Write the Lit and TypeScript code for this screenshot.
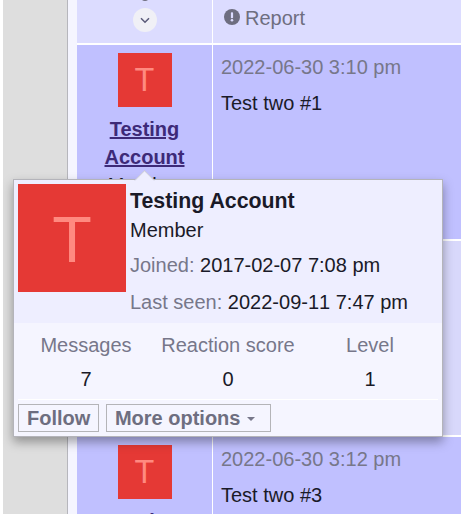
import { LitElement, html, css } from "lit";
import { customElement } from "lit/decorators.js";

@customElement("app-root")
export class AppRoot extends LitElement {
  static styles = css`
    :host {
      display: block;
      position: relative;
      width: 461px;
      height: 514px;
      overflow: hidden;
      background: #fff;
      font: 20px/28px "Liberation Sans", Arial, sans-serif;
      color: #1a1a28;
    }
    .page { display: flex; height: 100%; padding-left: 3px; box-sizing: border-box; }
    .side { width: 64px; flex: none; background: #dedede; border-right: 1px solid #b6b6bc; }
    .main { flex: 1; min-width: 0; background: #f5f5ff; padding-left: 9px; }
    .posts {
      display: grid;
      grid-template-columns: 135px 1fr;
      grid-template-rows: 43.4px 194.6px 194.6px 1fr;
      gap: 1.4px 1px;
      height: 100%;
      background: #fff;
    }
    .cell { overflow: hidden; min-width: 0; }
    .a { background: #dcdcff; }
    .b { background: #c0c0ff; }
    .c { background: #d8d8fb; }
    .user { display: flex; flex-direction: column; align-items: center; padding-top: 8px; text-align: center; }
    .msg { padding: 8px 0 0 8px; }
    .time { color: #77778a; margin: 0 0 8px; }
    .text { margin: 0; }
    .avatar {
      display: flex;
      align-items: center;
      justify-content: center;
      flex: none;
      background: #e53935;
      color: #ff8a80;
    }
    .avatar.s { width: 54px; height: 54px; font-size: 32.4px; margin-bottom: 8px; }
    .avatar.l { width: 108px; height: 108px; box-sizing: border-box; padding-top: 3px; font-size: 64.8px; line-height: 105px; }
    .name { color: #3d2a78; font-weight: 700; text-decoration: underline; }
    .more { display: flex; justify-content: center; padding-top: 8px; position: relative; }
    .more::before {
      content: "";
      position: absolute;
      left: calc(50% - 5px);
      top: -9px;
      width: 10px;
      height: 10px;
      border-radius: 50%;
      background: #6e6e80;
    }
    .chev {
      width: 24px;
      height: 24px;
      border-radius: 50%;
      background: #f0f0f6;
      display: flex;
      align-items: center;
      justify-content: center;
    }
    .report { display: flex; align-items: flex-start; gap: 5px; padding: 4px 0 0 11px; color: #6e6e80; }
    .report svg { margin-top: 5px; }
    .tip {
      position: absolute;
      left: 13px;
      top: 179px;
      width: 430px;
      height: 258px;
      box-sizing: border-box;
      border: 1px solid #b4b4ba;
      background: #eeeeff;
      box-shadow: 0 5px 10px rgba(0, 0, 0, 0.35);
      display: flex;
      flex-direction: column;
    }
    .arrow {
      position: absolute;
      left: 123px;
      top: -7px;
      width: 15px;
      height: 15px;
      box-sizing: border-box;
      background: #eeeeff;
      border-top: 1px solid #c4c4d2;
      border-left: 1px solid #c4c4d2;
      transform: rotate(45deg);
      clip-path: polygon(0 0, 100% 0, 0 100%);
    }
    .head { display: flex; gap: 4px; height: 143px; padding: 4px 4px 0; box-sizing: border-box; flex: none; }
    .info { display: flex; flex-direction: column; }
    .tname { font-weight: 700; font-size: 21.33px; height: 32px; line-height: 34px; }
    .role { height: 28px; line-height: 28px; margin-bottom: 4px; }
    .row { height: 37px; line-height: 34px; }
    .row span { color: #77778a; }
    .nk { font-kerning: none; }
    .foot { flex: 1; background: #f5f5ff; display: flex; flex-direction: column; }
    .stats {
      display: grid;
      grid-template-columns: repeat(3, 1fr);
      text-align: center;
      height: 76px;
      padding: 8px 1px 0;
      box-sizing: border-box;
      grid-auto-rows: 34px;
    }
    .rule { height: 1px; background: #fff; margin: 0 4px; flex: none; }
    .lab { color: #77778a; }
    .btns { display: flex; gap: 6.2px; padding: 4px 4px 0; }
    .btn {
      height: 28px;
      box-sizing: border-box;
      border: 1px solid #b4b4b8;
      padding: 0 8px;
      line-height: 26px;
      font-weight: 700;
      color: #6e6e80;
      display: flex;
      align-items: center;
    }
    .btn.wide { padding: 0 14.5px 0 8.4px; }
    .caret {
      width: 0;
      height: 0;
      margin-left: 7px;
      margin-top: 1px;
      border: 4.5px solid transparent;
      border-top: 4.5px solid #77778a;
      border-bottom: 0;
    }
    .plain { font-weight: 400; }
  `;

  render() {
    return html`
      <div class="page">
        <div class="side"></div>
        <div class="main">
          <div class="posts">
            <div class="cell a more">
              <div class="chev">
                <svg width="10" height="7" viewBox="0 0 10 7"><path d="M1 1.2 5 5.2 9 1.2" fill="none" stroke="#5a5a78" stroke-width="1.5" /></svg>
              </div>
            </div>
            <div class="cell a report">
              <svg width="16" height="16" viewBox="0 0 16 16">
                <circle cx="8" cy="8" r="8" fill="#6e6e80" />
                <rect x="6.9" y="3.2" width="2.2" height="6" rx="0.8" fill="#dcdcff" />
                <circle cx="8" cy="11.3" r="1.3" fill="#dcdcff" />
              </svg>
              Report
            </div>
            ${this.post("2022-06-30 3:10 pm", "Test two #1")}
            <div class="cell c"></div>
            <div class="cell c"></div>
            ${this.post("2022-06-30 3:12 pm", "Test two #3")}
          </div>
        </div>
      </div>
      <div class="tip">
        <div class="arrow"></div>
        <div class="head">
          <div class="avatar l">T</div>
          <div class="info">
            <div class="tname">Testing Account</div>
            <div class="role">Member</div>
            <div class="row"><span>Joined:</span> 2017-02-07 7:08 pm</div>
            <div class="row"><span>Last seen:</span> <b class="nk plain">2022-09-11 7:47 pm</b></div>
          </div>
        </div>
        <div class="foot">
          <div class="stats">
            <div class="lab">Messages</div>
            <div class="lab">Reaction score</div>
            <div class="lab">Level</div>
            <div>7</div>
            <div>0</div>
            <div>1</div>
          </div>
          <div class="rule"></div>
          <div class="btns">
            <div class="btn nk">Follow</div>
            <div class="btn wide">More options<i class="caret"></i></div>
          </div>
        </div>
      </div>
    `;
  }

  post(time: string, text: string) {
    return html`
      <div class="cell b user">
        <div class="avatar s">T</div>
        <div class="name">Testing<br />Account</div>
        <div>Member</div>
      </div>
      <div class="cell b msg">
        <p class="time">${time}</p>
        <p class="text">${text}</p>
      </div>
    `;
  }
}
